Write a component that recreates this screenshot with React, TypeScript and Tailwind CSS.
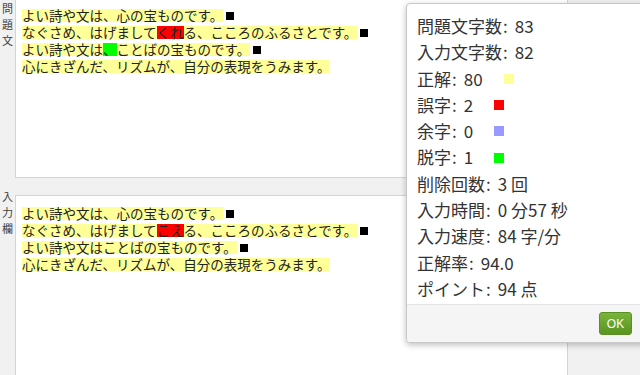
import React from "react";

type Seg = { t: string; c?: "y" | "r" | "g" };
type Line = { segs: Seg[]; br?: boolean };

const jp = { fontFamily: '"Noto Sans CJK JP", "Noto Sans", sans-serif' };

const mondai: Line[] = [
  { segs: [{ t: "よい詩や文は、心の宝ものです。" }], br: true },
  { segs: [{ t: "なぐさめ、はげまして" }, { t: "くれ", c: "r" }, { t: "る、こころのふるさとです。" }], br: true },
  { segs: [{ t: "よい詩や文は" }, { t: "、", c: "g" }, { t: "ことばの宝ものです。" }], br: true },
  { segs: [{ t: "心にきざんだ、リズムが、自分の表現をうみます。" }] },
];

const nyuryoku: Line[] = [
  { segs: [{ t: "よい詩や文は、心の宝ものです。" }], br: true },
  { segs: [{ t: "なぐさめ、はげまして" }, { t: "こえ", c: "r" }, { t: "る、こころのふるさとです。" }], br: true },
  { segs: [{ t: "よい詩や文はことばの宝ものです。" }], br: true },
  { segs: [{ t: "心にきざんだ、リズムが、自分の表現をうみます。" }] },
];

const segBg = {
  y: "bg-[#ffff99]",
  r: "bg-[#ff0000]",
  g: "bg-[#00ff00]",
};

function TextLines({ lines }: { lines: Line[] }) {
  return (
    <div className="text-[13.5px] text-[#222]" style={jp}>
      {lines.map((l, i) => (
        <div key={i} className="flex items-center h-[17px] whitespace-nowrap">
          {l.segs.map((s, j) => (
            <span key={j} className={`inline-block h-[13px] leading-[13px] ${segBg[s.c ?? "y"]}`}>
              {s.t}
            </span>
          ))}
          {l.br && <span className="inline-block ml-[3px] w-[8px] h-[8px] bg-black" />}
        </div>
      ))}
    </div>
  );
}

function Label({ chars }: { chars: string[] }) {
  return (
    <div className="w-[15px] shrink-0 pl-[2px] text-[11px] leading-[16px] text-[#444]" style={jp}>
      {chars.map((c) => (
        <div key={c}>{c}</div>
      ))}
    </div>
  );
}

const stats: { label: string; value: string; sq?: string }[] = [
  { label: "問題文字数", value: "83" },
  { label: "入力文字数", value: "82" },
  { label: "正解", value: "80", sq: "bg-[#ffff99]" },
  { label: "誤字", value: "2", sq: "bg-[#ff0000]" },
  { label: "余字", value: "0", sq: "bg-[#9999ff]" },
  { label: "脱字", value: "1", sq: "bg-[#00ff00]" },
  { label: "削除回数", value: "3 回" },
  { label: "入力時間", value: "0 分57 秒" },
  { label: "入力速度", value: "84 字/分" },
  { label: "正解率", value: "94.0" },
  { label: "ポイント", value: "94 点" },
];

export default function App() {
  return (
    <div className="relative w-[640px] h-[375px] overflow-hidden bg-[#f1f1f1]">
      {/* 問題文 */}
      <div className="flex">
        <Label chars={["問", "題", "文"]} />
        <div className="w-[553px] h-[178px] bg-white border border-t-0 border-[#d4d4d4] pl-[6px] pt-[7px]">
          <TextLines lines={mondai} />
        </div>
      </div>

      {/* 入力欄 */}
      <div className="flex mt-[10px]">
        <Label chars={["入", "力", "欄"]} />
        <div className="w-[553px] h-[200px] mt-[7px] bg-white border border-[#d4d4d4] pl-[6px] pt-[9px]">
          <TextLines lines={nyuryoku} />
        </div>
      </div>

      {/* 結果ダイアログ */}
      <div className="absolute left-[406px] top-[3px] w-[244px] h-[340px] flex flex-col bg-white border border-[#c8c8c8] rounded-[4px] shadow-[0_2px_6px_rgba(0,0,0,0.25)] overflow-hidden">
        <div className="flex-1 pl-[10px] pt-[9px] text-[17px] leading-[26.3px] text-[#333]" style={jp}>
          {stats.map((s) => (
            <div key={s.label} className="flex items-center whitespace-nowrap">
              <span>{s.label}</span>
              <span className="ml-[1px] mr-[7px]">:</span>
              <span>{s.value}</span>
              {s.sq && <span className={`inline-block ml-[21px] w-[10px] h-[10px] ${s.sq}`} />}
            </div>
          ))}
        </div>
        <div className="h-[38px] shrink-0 flex items-center justify-end pr-[17px] bg-[#f5f5f5] border-t border-[#e5e5e5]">
          <button
            className="w-[33px] h-[23px] rounded-[3px] text-[12px] text-white bg-gradient-to-b from-[#79b43a] to-[#5a9422] border border-[#5a8f25]"
            style={{ fontFamily: '"Liberation Sans", Arial, sans-serif' }}
          >
            OK
          </button>
        </div>
      </div>
    </div>
  );
}
